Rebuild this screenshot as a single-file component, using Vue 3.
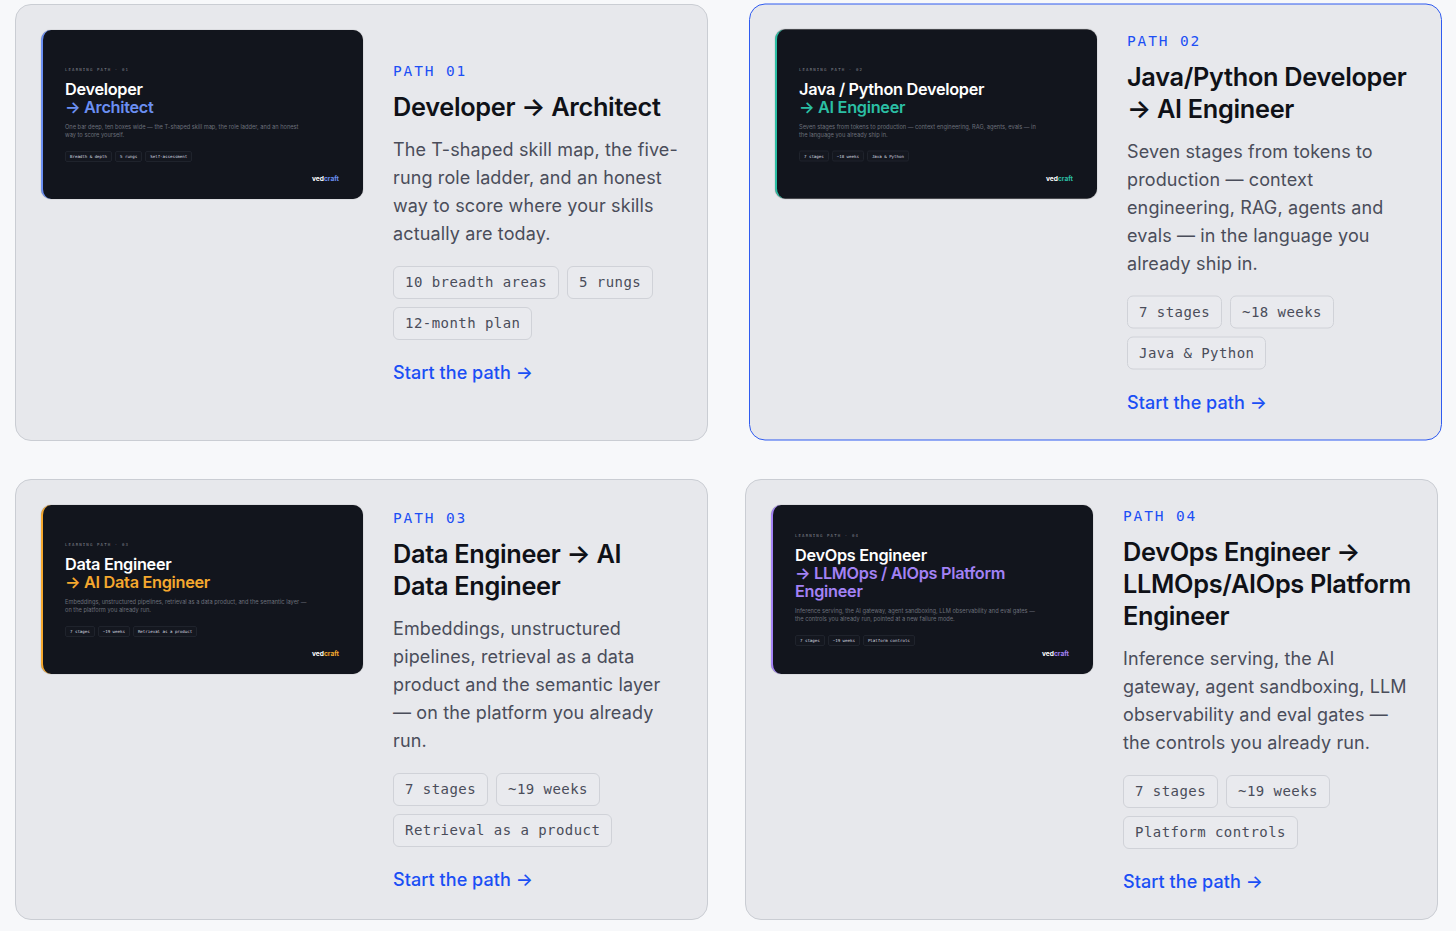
<script setup>
const paths = [
  { id: '01', accent: '#6b8ff2', title: 'Developer → Architect', desc: 'The T-shaped skill map, the five-rung role ladder, and an honest way to score where your skills actually are today.', tags: ['10 breadth areas', '5 rungs', '12-month plan'],
    t1: 'Developer', t2: '→ Architect', tdesc: 'One bar deep, ten boxes wide — the T-shaped skill map, the role ladder, and an honest way to score yourself.', ttags: ['Breadth & depth', '5 rungs', 'Self-assessment'] },
  { id: '02', accent: '#2bbfa4', active: true, title: 'Java/Python Developer → AI Engineer', desc: 'Seven stages from tokens to production — context engineering, RAG, agents and evals — in the language you already ship in.', tags: ['7 stages', '~18 weeks', 'Java & Python'],
    t1: 'Java / Python Developer', t2: '→ AI Engineer', tdesc: 'Seven stages from tokens to production — context engineering, RAG, agents, evals — in the language you already ship in.', ttags: ['7 stages', '~18 weeks', 'Java & Python'] },
  { id: '03', accent: '#f5a82e', title: 'Data Engineer → AI Data Engineer', desc: 'Embeddings, unstructured pipelines, retrieval as a data product and the semantic layer — on the platform you already run.', tags: ['7 stages', '~19 weeks', 'Retrieval as a product'],
    t1: 'Data Engineer', t2: '→ AI Data Engineer', tdesc: 'Embeddings, unstructured pipelines, retrieval as a data product, and the semantic layer — on the platform you already run.', ttags: ['7 stages', '~19 weeks', 'Retrieval as a product'] },
  { id: '04', accent: '#a382f5', title: 'DevOps Engineer → LLMOps/AIOps Platform Engineer', desc: 'Inference serving, the AI gateway, agent sandboxing, LLM observability and eval gates — the controls you already run.', tags: ['7 stages', '~19 weeks', 'Platform controls'],
    t1: 'DevOps Engineer', t2: '→ LLMOps / AIOps Platform Engineer', tdesc: 'Inference serving, the AI gateway, agent sandboxing, LLM observability and eval gates — the controls you already run, pointed at a new failure mode.', ttags: ['7 stages', '~19 weeks', 'Platform controls'] },
]
</script>

<template>
  <main class="grid">
    <article v-for="p in paths" :key="p.id" class="card" :class="{ active: p.active }">
      <div class="thumb" :style="{ borderLeftColor: p.accent }">
        <div class="t-eyebrow">LEARNING PATH · {{ p.id }}</div>
        <div class="t-title">{{ p.t1 }}<br /><span :style="{ color: p.accent }">{{ p.t2 }}</span></div>
        <p class="t-desc">{{ p.tdesc }}</p>
        <div class="t-tags"><span v-for="t in p.ttags" :key="t" class="t-tag">{{ t }}</span></div>
        <div class="t-logo">ved<span :style="{ color: p.accent }">craft</span></div>
      </div>
      <div class="body">
        <div class="eyebrow">PATH {{ p.id }}</div>
        <h2 class="title">{{ p.title }}</h2>
        <p class="desc">{{ p.desc }}</p>
        <div class="tags"><span v-for="t in p.tags" :key="t" class="tag">{{ t }}</span></div>
        <a class="link" href="#">Start the path →</a>
      </div>
    </article>
  </main>
</template>

<style>
html, body { margin: 0; background: #f7f8fa; }
</style>

<style scoped>
.grid {
  display: grid;
  grid-template-columns: 693px 693px;
  grid-template-rows: 437px 441px;
  column-gap: 37px;
  row-gap: 38px;
  padding: 4px 0 0 15px;
  font-family: Inter, "Liberation Sans", sans-serif;
}
.card {
  box-sizing: border-box;
  display: flex;
  gap: 30px;
  padding: 25px;
  background: #e7e8ec;
  border: 1px solid #cacdd3;
  border-radius: 16px;
}
.card.active {
  border-color: #2f5bf0;
  transform: translate(4px, -0.5px);
}
.thumb {
  box-sizing: border-box;
  position: relative;
  flex: 0 0 322px;
  height: 169px;
  padding: 0 24px 1px 22px;
  display: flex;
  flex-direction: column;
  justify-content: center;
  background: #12151d;
  border-left: 2px solid;
  border-radius: 10px;
  box-shadow: 0 0 1px rgba(0, 0, 0, 0.5);
  overflow: hidden;
}
.t-eyebrow {
  font-family: "DejaVu Sans Mono", monospace;
  font-size: 4px;
  line-height: 6px;
  letter-spacing: 1.15px;
  color: #80848e;
  margin-bottom: 7px;
}
.t-title {
  font-size: 16.3px;
  line-height: 18px;
  font-weight: 600;
  letter-spacing: -0.3px;
  color: #fff;
  margin-bottom: 7px;
  max-width: 235px;
}
.t-desc {
  margin: 0 0 11px;
  font-size: 5.7px;
  line-height: 8.5px;
  color: #6b6f7a;
  max-width: 242px;
}
.t-tags { display: flex; gap: 3px; }
.t-tag {
  font-family: "DejaVu Sans Mono", monospace;
  font-size: 4.1px;
  line-height: 9px;
  padding: 0 4px;
  color: #d9dbe0;
  background: #14171f;
  border: 1px solid #1f232c;
  border-radius: 2px;
}
.t-logo {
  position: absolute;
  right: 24px;
  bottom: 16px;
  font-size: 6.6px;
  line-height: 8px;
  font-weight: 700;
  color: #fff;
}
.body {
  flex: 1;
  min-width: 0;
  padding-top: 4px;
  display: flex;
  flex-direction: column;
  justify-content: center;
  align-items: flex-start;
}
.eyebrow {
  font-family: "DejaVu Sans Mono", monospace;
  font-size: 14.5px;
  line-height: 18px;
  letter-spacing: 1.85px;
  color: #1c4ff5;
  margin-bottom: 11px;
}
.title {
  margin: 0 0 13px;
  font-size: 25.3px;
  line-height: 32px;
  font-weight: 600;
  letter-spacing: -0.3px;
  color: #0f1117;
}
.desc {
  margin: 0 0 18px;
  font-size: 18px;
  line-height: 28px;
  letter-spacing: 0.13px;
  color: #4a4d5a;
}
.tags {
  display: flex;
  flex-wrap: wrap;
  gap: 8px;
  margin-bottom: 19px;
}
.tag {
  font-family: "DejaVu Sans Mono", monospace;
  font-size: 14px;
  line-height: 31px;
  letter-spacing: 0.45px;
  padding: 0 11px;
  color: #4a4d5a;
  border: 1px solid #d0d2d8;
  border-radius: 6px;
  background: #e9eaee;
}
.link {
  font-size: 18px;
  line-height: 28px;
  font-weight: 500;
  letter-spacing: 0.05px;
  color: #1a4ff5;
  text-decoration: none;
}
</style>
